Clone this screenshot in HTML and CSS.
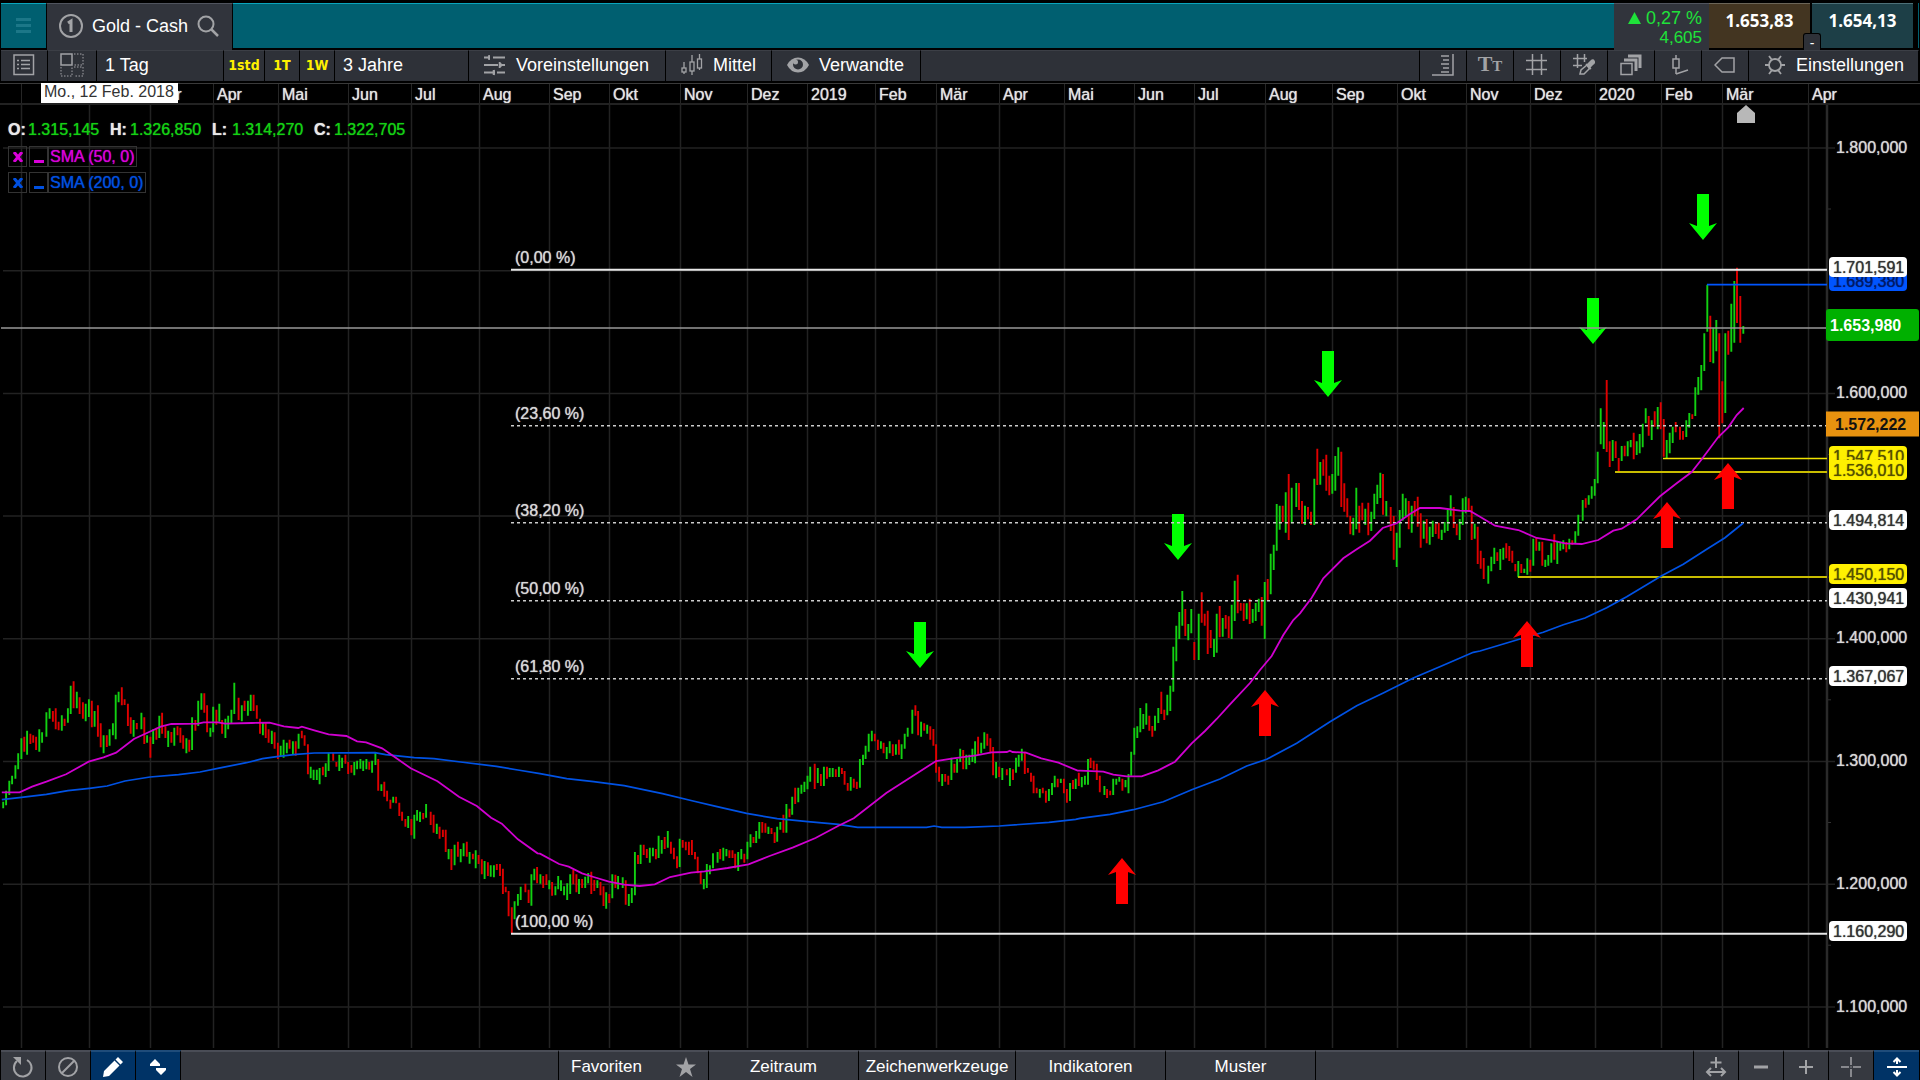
FILE: index.html
```html
<!DOCTYPE html>
<html lang="de">
<head>
<meta charset="utf-8">
<title>Gold - Cash</title>
<link rel="stylesheet" href="styles.css">
</head>
<body>
<header class="titlebar">
  <button class="menu" aria-label="Menü"><svg width="16" height="16" viewBox="0 0 16 16"><path d="M0 0h15v3H0zM0 6h15v3H0zM0 12h15v3H0z" fill="#1c7788"/></svg></button>
  <button class="tab">
    <svg width="24" height="24" viewBox="0 0 24 24" fill="none" stroke="#a2a3a6" stroke-width="2"><circle cx="12" cy="12" r="11"/><path d="M9 9l3-2v11" stroke-width="3"/></svg>
    <span>Gold - Cash</span>
    <svg width="22" height="22" viewBox="0 0 22 22" fill="none" stroke="#a2a3a6" stroke-width="2"><circle cx="9" cy="9" r="7.5"/><path d="M14.5 14.5l6.500 6.500" stroke-width="2.500"/></svg>
  </button>
  <div class="spacer"></div>
  <div class="change"><span class="percent"><svg width="13" height="12" viewBox="0 0 13 12"><path d="M6.500 0L13 12H0z" fill="#1fe23a"/></svg>0,27 %</span><span class="points">4,605</span></div>
  <div class="quotes">
    <button class="quote sell">1.653,83</button>
    <button class="quote buy">1.654,13</button>
    <span class="spread">-</span>
  </div>
</header>

<nav class="toolbar" aria-label="Diagramm">
  <button class="cell icon" aria-label="Liste"><svg width="22" height="22" viewBox="0 0 22 22" fill="none" stroke="#a2a3a6"><rect x="1" y="1" width="19.500" height="19.500" stroke-width="1.500"/><path d="M8 6.500h9M8 10.500h9M8 14.500h9" stroke-width="1.500"/><path d="M4 6.500h2M4 10.500h2M4 14.500h2" stroke-width="1.500"/></svg></button>
  <button class="cell icon wide" aria-label="Layout"><svg width="24" height="24" viewBox="0 0 24 24" fill="none" stroke="#a2a3a6"><rect x="1" y="1" width="11" height="11" stroke-width="1.500"/><path d="M14 1h9v11h-9M1 14v9h11v-9M14 14h9v9h-9" stroke-dasharray="1.500 1.500"/></svg></button>
  <button class="cell interval">1 Tag</button>
  <button class="cell quick h1">1std</button>
  <button class="cell quick t1">1T</button>
  <button class="cell quick t1">1W</button>
  <button class="cell period">3 Jahre</button>
  <button class="cell labelled presets"><svg width="22" height="22" viewBox="0 0 22 22" fill="none" stroke="#a2a3a6" stroke-width="2"><path d="M0 3.500h6M9 3.500h12M0 11h14M17 11h4M0 18.500h9M13 18.500h8"/><path d="M5 1v5M15.500 8v6M9.500 16v5" stroke-width="1.500"/><path d="M3 3.500L6 1v5zM19 11l-3-3v6zM8 18.500l3-3v6z" fill="#a2a3a6" stroke="none"/></svg>Voreinstellungen</button>
  <button class="cell labelled medium"><svg width="22" height="22" viewBox="0 0 22 22" fill="none" stroke="#a2a3a6" stroke-width="1.300"><rect x="1" y="14" width="4" height="4"/><path d="M3 8v6M3 18v2M11 1v7M11 17v4M18.500 0v5M18.500 14v2"/><rect x="9" y="8" width="4" height="9"/><rect x="16.500" y="5" width="4" height="9"/></svg>Mittel</button>
  <button class="cell labelled related"><svg width="22" height="22" viewBox="0 0 22 22"><path d="M0 11Q4 3.500 11 3.500T22 11Q18 18.500 11 18.500T0 11z" fill="#a2a3a6"/><circle cx="11" cy="10.500" r="5" fill="#2e3138"/><circle cx="8.500" cy="8" r="2.500" fill="#a2a3a6"/></svg>Verwandte</button>
  <div class="cell spacer"></div>
  <button class="cell icon" aria-label="Preisachse"><svg width="22" height="22" viewBox="0 0 22 22" fill="none" stroke="#a2a3a6" stroke-width="1.500"><path d="M0 21h21V0M9 2h8M11 6h6M9 10h8M11 14h6M9 18h8"/></svg></button>
  <button class="cell icon" aria-label="Text"><span class="glyph">T<small>T</small></span></button>
  <button class="cell icon" aria-label="Raster"><svg width="22" height="22" viewBox="0 0 22 22" fill="none" stroke="#a2a3a6" stroke-width="1.500"><path d="M6.500 0v21M15.500 0v21M0 6.500h21M0 15.500h21"/></svg></button>
  <button class="cell icon" aria-label="Rasterfarbe"><svg width="22" height="22" viewBox="0 0 22 22" fill="none" stroke="#a2a3a6" stroke-width="1.500"><path d="M4.500 0v14M11.500 0v8M0 4.500h14M0 11.500h9"/><path d="M13 10l5 5M7 20l1-4 6-5 3 3-6 6z"/><path d="M14 11l4-4q2-2 3 0t-1 3l-4 4z" fill="#a2a3a6"/></svg></button>
  <button class="cell icon" aria-label="Ebenen"><svg width="22" height="22" viewBox="0 0 22 22" fill="none" stroke="#a2a3a6"><rect x="1" y="9.500" width="11" height="11" stroke-width="1.500"/><path d="M4 6h12v11M8 2h12v12" stroke-width="3"/></svg></button>
  <button class="cell icon" aria-label="Kerze"><svg width="22" height="22" viewBox="0 0 22 22" fill="none" stroke="#a2a3a6" stroke-width="1.500"><rect x="6" y="5" width="6" height="9"/><path d="M9 1v4M9 14v6M9 20l12-4"/></svg></button>
  <button class="cell icon" aria-label="Preismarke"><svg width="22" height="22" viewBox="0 0 22 22" fill="none" stroke="#a2a3a6" stroke-width="1.500"><path d="M1 11l7-7h12v14H8z"/></svg></button>
  <button class="cell labelled settings"><svg width="22" height="22" viewBox="0 0 22 22" fill="none" stroke="#a2a3a6" stroke-width="1.800"><circle cx="11" cy="11" r="6"/><path d="M17 11h4M1 11h4M14 6l3-4M8 6L5 2M14 16l3 4M8 16l-3 4"/></svg>Einstellungen</button>
</nav>

<main class="chart">
  <div class="months" id="months"></div>
  <time class="date-flag">Mo., 12 Feb. 2018</time>
  <section class="plot">
    <svg id="drawing" class="drawing" viewBox="0 105 1920 945" preserveAspectRatio="none" role="img" aria-label="Goldkurs, 3 Jahre"></svg>
    <div id="labels"></div>
    <div class="legend">
      <dl class="ohlc">
        <div><dt>O:</dt><dd>1.315,145</dd></div>
        <div><dt>H:</dt><dd>1.326,850</dd></div>
        <div><dt>L:</dt><dd>1.314,270</dd></div>
        <div><dt>C:</dt><dd>1.322,705</dd></div>
      </dl>
      <div class="sma fast"><button aria-label="Entfernen"><svg width="10" height="10" viewBox="0 0 10 10"><path d="M1 0l8 10M9 0L1 10" stroke="currentColor" stroke-width="3"/></svg></button><button aria-label="Minimieren"><i class="dash"></i></button><span>SMA (50, 0)</span></div>
      <div class="sma slow"><button aria-label="Entfernen"><svg width="10" height="10" viewBox="0 0 10 10"><path d="M1 0l8 10M9 0L1 10" stroke="currentColor" stroke-width="3"/></svg></button><button aria-label="Minimieren"><i class="dash"></i></button><span>SMA (200, 0)</span></div>
    </div>
  </section>
</main>

<footer class="bottombar">
  <button class="cell tool" aria-label="Zurücksetzen"><svg width="22" height="22" viewBox="0 0 22 22" fill="none" stroke="#a2a3a6" stroke-width="2"><path d="M5 5A8.800 8.800 0 1 0 15 4"/><path d="M1 1h8v8z" fill="#a2a3a6" stroke="none"/></svg></button>
  <button class="cell tool" aria-label="Sperren"><svg width="22" height="22" viewBox="0 0 22 22" fill="none" stroke="#a2a3a6" stroke-width="2"><circle cx="11" cy="11" r="9"/><path d="M5 17L17 5"/></svg></button>
  <button class="cell tool active" aria-label="Zeichnen"><svg width="22" height="22" viewBox="0 0 22 22" fill="#fff"><path d="M1 21l1-6L12.500 4.500l5 5L7 20zM13.500 3.500L16 1l5 5-2.500 2.500z"/></svg></button>
  <button class="cell tool active" aria-label="Verschieben"><svg width="18" height="18" viewBox="0 0 18 18" fill="#fff"><path d="M1 8V6l5-5 5 5v2zM7 10h10v2l-5 5-5-5z"/></svg></button>
  <div class="cell spacer"></div>
  <button class="cell favourites">Favoriten<svg width="20" height="20" viewBox="0 0 20 20"><path d="M10 0l2.500 7.500H20l-6 4.500 2.500 8-6.500-5-6.500 5L6 12 0 7.500h7.500z" fill="#a2a3a6"/></svg></button>
  <button class="cell group">Zeitraum</button>
  <button class="cell group drawtools">Zeichenwerkzeuge</button>
  <button class="cell group">Indikatoren</button>
  <button class="cell group">Muster</button>
  <div class="cell spacer"></div>
  <button class="cell tool" aria-label="Breite"><svg width="22" height="22" viewBox="0 0 22 22" fill="none" stroke="#a2a3a6" stroke-width="2"><path d="M11 1v11M5.500 6.500h11M2 16h18M6 12l-4 4 4 4M16 12l4 4-4 4"/></svg></button>
  <button class="cell tool" aria-label="Verkleinern"><svg width="22" height="22" viewBox="0 0 22 22"><path d="M4 9.500h14v3H4z" fill="#a2a3a6"/></svg></button>
  <button class="cell tool" aria-label="Vergrößern"><svg width="22" height="22" viewBox="0 0 22 22"><path d="M4 10h14v2H4zM10 4h2v14h-2z" fill="#a2a3a6"/></svg></button>
  <button class="cell tool" aria-label="Fadenkreuz"><svg width="20" height="20" viewBox="0 0 20 20" stroke="#a2a3a6" stroke-width="1.500"><path d="M10 0v8M10 12v8M0 10h8M12 10h8M9.500 10h1"/></svg></button>
  <button class="cell tool active last" aria-label="Automatisch skalieren"><svg width="20" height="20" viewBox="0 0 20 20" fill="none" stroke="#fff" stroke-width="2"><path d="M0 10h20M10 1v6M10 13v6M6.500 5L10 1.500 13.500 5M6.500 15l3.500 3.500 3.500-3.500"/></svg></button>
</footer>
<script src="chart.js"></script>
</body>
</html>
```

FILE: styles.css
```css
* { box-sizing: border-box; }

body {
  margin: 0;
  min-height: 100vh;
  display: flex;
  flex-direction: column;
  padding: 3px 1px 0;
  background: #000;
  color: #fff;
  font: 18px/20px "Liberation Sans", Arial, sans-serif;
}

button {
  margin: 0;
  padding: 0;
  border: 0;
  background: none;
  color: inherit;
  font: inherit;
  white-space: nowrap;
}

svg { display: block; flex: none; }
.spacer { flex: 1; }

/* title bar */
.titlebar {
  display: flex;
  height: 47px;
  padding-bottom: 2px;
}

.menu, .titlebar > .spacer {
  background: #005f70;
  border-top: 1px solid #0aa5bd;
}
.menu { width: 45px; padding-left: 15px; }

.tab {
  display: flex;
  align-items: center;
  gap: 9px;
  width: 187px;
  height: 47px;
  padding: 0 0 2px 12px;
  background: #31343c;
  border: 1px solid #000;
  border-top-color: #50545e;
  border-bottom: 0;
}

.change {
  display: flex;
  flex-direction: column;
  align-items: flex-end;
  width: 95px;
  height: 47px;
  padding: 4px 7px 0 0;
  background: #31343c;
  border-top: 1px solid #50545e;
  color: #1fe23a;
}
.percent { display: flex; align-items: center; gap: 5px; }
.points { font-size: 17px; }

.quotes {
  display: flex;
  gap: 2px;
  position: relative;
  padding-right: 5px;
  border-right: 1px solid #005f70;
}
.quote {
  width: 101px;
  padding-bottom: 10px;
  font: bold 17px/20px "Open Sans", sans-serif;
  border-top: 1px solid #6b6558;
}
.sell { background: #433521; }
.buy { background: #1d3f47; border-top-color: #4d7078; }
.spread {
  position: absolute;
  left: 94px;
  top: 30px;
  width: 18px;
  height: 17px;
  border: 1px solid #000;
  border-bottom: 0;
  border-radius: 3px 3px 0 0;
  background: #2e3138;
  font-size: 14px;
  line-height: 18px;
  text-align: center;
}

/* toolbars */
.toolbar { display: flex; height: 31px; }

.cell {
  display: flex;
  align-items: center;
  border-top: 1px solid #3c3f46;
  border-right: 1px solid #000;
  background: #2e3138;
}
.toolbar .cell { padding-bottom: 2px; }
.icon { justify-content: center; width: 47px; }
.wide { width: 49px; }
.interval { width: 127px; padding-left: 8px; }
.quick {
  justify-content: center;
  color: #fff000;
  font: bold 14px/20px "DejaVu Sans Condensed", "DejaVu Sans", sans-serif;
}
.h1 { width: 41px; }
.t1 { width: 35px; }
.period { width: 134px; padding-left: 8px; }
.labelled { gap: 10px; padding-left: 15px; }
.presets { width: 197px; }
.medium { width: 106px; }
.related { width: 149px; }
.settings { width: 170px; }
.glyph { color: #a2a3a6; font: bold 22px/24px "Liberation Serif", serif; }
.glyph small { font-size: 15px; }

.bottombar { display: flex; height: 30px; font-size: 17px; }
.bottombar .cell { background: #363940; border-top: 2px solid #4a4d56; padding-top: 1px; }
.tool { justify-content: center; width: 45px; }
.bottombar .active { background: #003366; border-top-color: #1f4c7a; }
.bottombar .last { border-right: 0; }
.favourites { justify-content: space-between; width: 150px; padding: 0 12px; }
.group { justify-content: center; width: 150px; }
.drawtools { width: 157px; }

/* chart */
.chart {
  position: relative;
  flex: 1;
  display: flex;
  flex-direction: column;
  margin: 2px -1px 0;
  font-size: 16px;
}

.months {
  display: flex;
  height: 22px;
  border-top: 1px solid #3a3a3a;
  border-bottom: 2px solid #222;
  line-height: 22px;
  color: #e4e4e4;
  text-shadow: 0 0 1px currentColor;
}
.month {
  flex: none;
  padding-left: 3px;
  border-left: 1px solid #262626;
}
.month:first-child { border: 0; }

.date-flag {
  position: absolute;
  left: 41px;
  top: 0;
  width: 137px;
  height: 20px;
  padding-left: 3px;
  line-height: 18px;
  background: #fff;
  color: #333;
}

.plot { position: relative; flex: 1; }
.drawing { position: absolute; inset: 0; width: 100%; height: 100%; }

.legend { position: relative; padding: 15px 0 0 8px; text-shadow: 0 0 1px currentColor; }
.ohlc { display: flex; margin: 0 0 6px; }
.ohlc div { display: flex; width: 102px; }
.ohlc dt { width: 20px; font-weight: bold; color: #e8e8e8; }
.ohlc dd { margin: 0; color: #14d014; }

.sma { display: flex; width: max-content; margin-bottom: 5px; }
.sma button, .sma span { height: 21px; border: 1px solid #333; }
.sma button {
  display: flex;
  align-items: center;
  justify-content: center;
  width: 19px;
  margin-right: 2px;
}
.sma button + button { margin-right: 0; }
.sma span { padding: 0 2px 0 1px; line-height: 19px; }
.fast { color: #d800d8; }
.slow { color: #0050e0; }
.dash { width: 10px; height: 3px; margin-top: 10px; background: currentColor; }

.label {
  position: absolute;
  height: 20px;
  line-height: 21px;
  transform: translateY(-50%);
  white-space: nowrap;
  color: #d8d8d8;
  text-shadow: 0 0 1px currentColor;
}
.label.tag { width: 78px; padding-left: 4px; border-radius: 4px; background: #fff; color: #333; }
.label.blue { background: #0055ff; color: #001a66; }
.label.yellow { background: #fff000; color: #554f00; }
.label.live, .label.average { width: 93px; font-weight: bold; text-shadow: none; }
.label.live {
  height: 32px;
  padding-left: 4px;
  line-height: 34px;
  border-radius: 3px;
  background: #00b000;
  color: #fff;
}
.label.average { height: 25px; padding-left: 9px; line-height: 25px; background: #e8920f; color: #111; }
```

FILE: chart.js
```js
const W = 1920, TOP = 105, H = 945, AXIS = 1827;

// Time axis: [start of the month, name]
const months = [[0, ''], [21, ''], [89, ''], [150, 'Mär'], [213, 'Apr'], [278, 'Mai'], [348, 'Jun'], [411, 'Jul'],
  [479, 'Aug'], [549, 'Sep'], [609, 'Okt'], [680, 'Nov'], [747, 'Dez'], [807, '2019'], [875, 'Feb'], [936, 'Mär'],
  [999, 'Apr'], [1064, 'Mai'], [1134, 'Jun'], [1194, 'Jul'], [1265, 'Aug'], [1332, 'Sep'], [1397, 'Okt'],
  [1466, 'Nov'], [1530, 'Dez'], [1595, '2020'], [1661, 'Feb'], [1722, 'Mär'], [1808, 'Apr']];

// Price axis: [height, price]
const prices = [[148, '1.800,000'], [393, '1.600,000'], [638, '1.400,000'], [761, '1.300,000'], [884, '1.200,000'], [1007, '1.100,000']];

const fib = [[270, '(0,00 %)'], [426, '(23,60 %)'], [523, '(38,20 %)'], [601, '(50,00 %)'], [679, '(61,80 %)'], [934, '(100,00 %)']];

const tags = [[281, '1.689,380', 'tag blue'], [267, '1.701,591', 'tag'], [325, '1.653,980', 'live'],
  [424, '1.572,222', 'average'], [456, '1.547,510', 'tag yellow'], [470, '1.536,010', 'tag yellow'],
  [520, '1.494,814', 'tag'], [574, '1.450,150', 'tag yellow'], [598, '1.430,941', 'tag'],
  [676, '1.367,067', 'tag'], [931, '1.160,290', 'tag']];

// Each stretch has its own origin and units per pixel.
// bars: x, high, low; a negative x is a falling day.
const stretches = [
  { x: 0, y: 640, kx: 2.8, bars: [
    9,485,505, 17,452,496, 26,422,465, 34,407,433, 43,376,416, 51,340,388, 60,295,357, -68,290,335, 76,272,344, -85,281,312,
    -93,286,308, -101,290,330, 110,268,335, 118,277,308, 130,217,290, 139,205,236, -148,213,245, -156,205,268, -164,245,271,
    173,226,272, -181,236,258, 190,205,248, 198,137,222, -206,124,205, 215,155,205, -223,172,222, -232,187,236, 240,191,244,
    249,178,231, -257,182,262, 265,213,260, -274,196,290, -282,250,322, 290,286,340, -299,286,321, 307,268,317, 316,250,286,
    324,164,298, 332,155,187, -341,142,196, -349,178,195, -358,191,258, -366,232,281, 374,240,290, -383,249,268, 396,218,268,
    -404,232,312, 412,286,308, -421,290,353, 429,268,312, -438,263,299, 446,227,294, -454,218,281, -463,259,294, 471,272,321,
    -480,276,308, 488,263,317, -497,259,286, -505,263,308, -513,286,326, 522,295,340, -530,299,335, 538,232,330, -547,240,272,
    555,182,258, 564,160,209, -572,160,218, -580,196,277, 589,263,290, 597,200,277, -606,209,254, 614,191,245, -622,240,281,
    631,236,294, 639,227,268, 648,209,250, 656,128,222, -668,173,240, 677,196,244, -685,182,213, 694,182,227, 702,164,213,
    -710,164,213, -719,196,236, -728,236,281, 736,249,286, -744,250,294, -752,268,308, 761,272,312, -769,277,326, -778,308,357,
    786,317,349, 794,299,353, 803,308,340, -811,299,326, 820,304,344, -828,304,347, 836,281,326, -845,272,295, -853,286,317,
    -862,313,403, 870,380,415, 878,389,420, 887,389,420, 895,384,433, -904,380,406, 912,370,411, 920,338,393, -933,338,362,
    -942,366,380, 950,344,393, 958,353,384, -967,344,371, -975,366,402, -984,375,398, 992,366,406, 1000,362,388, 1009,357,386,
    1017,362,393, 1026,357,388, -1034,366,389, 1042,362,398, 1051,338,375, -1059,357,452, 1068,433,453, -1076,425,470,
    -1084,452,484, -1093,479,506, 1101,470,488, -1109,470,490, -1118,488,528, -1126,515,542, -1135,537,560, 1143,528,564,
    -1152,537,586, 1160,524,596, 1168,510,542, 1176,515,546, -1185,519,538, 1193,492,533, -1206,515,555, -1214,524,578,
    1223,551,582, -1231,560,596, -1240,569,591, -1248,569,636, 1256,627,658, -1264,627,690, 1273,614,676, -1282,605,650,
    1290,627,667, 1298,610,649, -1307,605,650, 1315,636,671, -1324,641,658, 1332,631,685, -1340,645,672, -1349,658,703,
    1357,663,717, -1366,667,708, 1374,676,710, 1383,676,712, -1391,672,690, -1400,672,708, -1408,686,762, -1416,740,757,
    -1424,753,829, -1433,802,880, 1441,784,838, 1450,762,797, 1458,740,780, -1471,731,757, -1480,749,789, 1488,703,797,
    1496,686,721, -1504,681,730, 1513,703,731, -1521,708,744, -1530,703,735, 1538,721,748, -1546,726,767, 1555,739,766, 1563,708,748],
    fast: [5,457, 55,457, 90,440, 130,425, 185,403, 248,365, 290,352, 325,338, 375,297, 425,272, 450,260, 480,252, 555,251,
      570,247, 610,247, 630,251, 705,249, 755,248, 795,259, 835,264, 845,260, 880,271, 920,283, 970,288, 1000,304, 1025,307,
      1070,325, 1100,347, 1150,385, 1225,424, 1285,470, 1335,498, 1375,533, 1405,551, 1450,598, 1505,640],
    slow: [5,479, 60,472, 130,463, 190,452, 250,445, 300,438, 350,423, 420,411, 500,404, 560,396, 620,383, 690,368, 735,356,
      780,349, 830,343, 880,339, 1050,338, 1080,344, 1160,353, 1215,356, 1290,366, 1390,379, 1450,390] },
  { x: 540, y: 640, kx: 2.6133, bars: [
    55,721,753, 63,739,766, 71,730,780, 79,703,762, -87,690,733, -95,703,757, 102,717,762, -110,717,744, 118,710,744, 126,699,730,
    -134,695,762, -142,720,753, 150,721,744, -158,726,766, -166,739,798, 173,757,806, -181,762,789, 189,703,775, -197,704,744,
    204,708,748, 216,712,744, -224,721,794, 232,762,798, 240,744,789, 248,636,766, -256,645,672, 263,614,672, -271,614,645,
    -279,627,654, 287,623,668, 295,623,649, -303,627,658, 310,587,654, 318,600,641, -326,591,627, 334,573,623, -342,605,641,
    -350,623,658, -358,649,685, 365,596,681, -373,600,623, -381,605,631, -389,605,645, -397,600,645, -405,636,658, -412,650,700,
    -420,694,732, 428,717,748, 436,672,744, 444,676,703, 452,640,685, 464,636,668, -471,627,658, 479,623,662, 487,627,649,
    -495,631,654, -503,631,654, -510,641,685, 518,636,693, 526,627,658, -534,641,668, 542,605,658, 550,583,622, -558,591,609,
    565,573,609, 573,546,596, -581,546,578, -589,550,578, 597,560,582, -605,564,582, -613,577,609, 620,560,605, 628,546,569,
    -636,524,578, 644,492,578, -652,506,532, 659,470,524, -667,443,492, 675,443,487, 683,434,461, 691,425,456, 699,407,448,
    706,380,425, -718,371,447, 726,384,429, -734,402,438, 742,380,438, -750,380,416, 757,384,411, 765,384,411, -773,388,411,
    781,380,411, -789,384,402, -796,393,434, -804,429,452, 812,411,452, -820,416,443, -828,425,447, 836,357,443, 844,344,375,
    851,317,357, 859,281,335, 867,272,304, -875,281,304, -883,299,330, 891,304,326, -898,308,340, 906,321,357, 914,304,340,
    -922,313,348, 930,313,344, -938,299,344, 945,313,357, 953,281,326, 961,263,290, 973,209,281, -981,196,227, -988,213,286,
    996,245,290, -1004,250,272, 1012,254,281, -1020,259,299, -1028,267,317, -1035,313,398, -1043,380,425, 1051,402,438,
    -1059,402,425, -1067,407,434, 1075,353,420, -1083,371,398, 1090,357,398, 1098,326,366, -1106,330,388, 1114,344,388,
    1122,344,375, 1130,326,366, 1137,304,370, -1145,290,344, 1153,308,340, 1161,277,326, -1169,281,317, -1177,295,340,
    -1184,321,406, 1192,366,415, -1200,380,411, 1208,384,420, -1220,388,406, 1228,384,438, -1236,388,420, 1244,353,398,
    1251,344,380, 1259,326,362, -1267,335,402, -1275,384,398, -1283,398,425, -1290,407,460, -1298,443,460, 1306,447,473,
    -1314,443,460, -1322,452,488, 1330,447,483, 1338,429,465, 1345,407,442, -1353,416,442, 1361,416,429, -1369,416,460,
    -1377,447,488, 1385,429,483, -1393,420,447, 1400,416,447, -1408,398,438, 1416,411,442, 1424,407,434, 1432,357,434,
    -1439,353,384, -1447,362,389, -1455,371,420, -1463,407,457, 1475,438,465, -1482,447,474, -1490,452,466, 1498,416,465,
    1506,416,434, 1514,411,425, -1522,416,452, 1530,420,442, 1538,402,460, 1545,335,407, 1553,263,344, 1561,259,294],
    fast: [0,641, 50,672, 75,680, 110,700, 140,711, 180,725, 220,734, 260,738, 300,733, 340,711, 395,698, 430,694, 490,684,
      545,673, 600,648, 660,623, 720,594, 780,557, 820,535, 905,459, 970,411, 1035,363, 1080,355, 1140,346, 1180,337, 1220,336,
      1228,332, 1235,336, 1270,338, 1310,355, 1355,368, 1405,392],
    slow: [0,401, 70,416, 140,425, 220,437, 320,461, 400,483, 460,499, 540,520, 620,536, 700,545, 780,553, 830,562, 1010,562,
      1030,558, 1050,562, 1110,562, 1200,558, 1330,547, 1400,538] },
  { x: 1080, y: 400, kx: 3, bars: [
    181,924,997, 190,942,987, 199,910,974, -208,947,992, -217,978,1010, 225,947,992, 235,924,969, -244,875,942, -253,929,960,
    262,884,946, 271,857,933, 280,740,875, 289,677,784, 298,636,717, 307,573,677, -316,627,708, 325,672,721, 334,627,700,
    -343,726,780, 356,641,780, -365,577,668, -374,641,677, -383,632,762, -392,690,744, 402,717,771, 410,641,758, -419,618,712,
    428,654,710, -437,645,686, -446,649,714, 455,614,717, 464,542,663, -473,524,640, -482,609,632, -491,610,663, 500,610,658,
    -509,596,672, 518,627,668, 527,609,663, 536,596,636, -545,591,677, 554,546,717, -563,537,602, 572,461,583, 581,434,510,
    590,312,452, 599,317,389, -608,317,366, 617,277,398, -626,222,420, 635,263,370, 649,249,321, -657,249,330, -666,303,371,
    675,317,375, -684,321,358, -693,335,375, 703,236,375, -712,146,255, 721,186,254, -730,178,227, -739,164,272, -748,227,286,
    757,222,281, 766,168,272, 775,142,227, -784,155,321, -793,250,335, -802,295,352, -811,348,403, 820,353,406, 829,263,388,
    -838,317,398, -847,308,361, 856,326,375, -865,308,406, 874,335,393, 883,281,357, 892,254,312, 901,218,294, -909,222,344,
    919,303,349, -932,321,393, -941,348,479, 950,398,501, 959,330,443, 968,281,362, 977,295,348, -986,303,388, 995,317,398,
    -1004,303,348, -1013,290,380, -1022,340,443, 1031,362,416, -1040,357,430, 1049,380,434, 1058,362,411, -1067,371,402,
    -1076,368,416, 1085,389,420, 1094,366,398, 1103,330,393, 1112,286,348, -1121,321,384, -1130,371,406, 1139,357,420,
    1148,295,375, 1157,290,340, -1166,295,335, -1175,317,420, 1184,371,416, -1193,380,492, -1202,452,506, -1211,474,537,
    1225,497,551, 1234,470,514, 1243,443,492, -1252,457,483, 1261,447,510, 1270,443,479, -1279,430,475, -1288,438,483,
    -1297,452,488, -1306,492,514, 1315,483,532, -1324,492,519, 1333,506,519, 1342,475,524, -1351,479,515, 1360,416,497,
    -1369,412,452, 1378,425,452, -1387,425,497, 1396,479,501, 1405,465,497, 1414,430,488, -1423,403,479, 1432,425,492],
    fast: [0,1112, 70,1115, 100,1124, 140,1129, 185,1129, 235,1111, 285,1085, 335,1030, 375,993, 410,957, 450,913, 510,849,
      540,810, 575,768, 610,705, 640,660, 660,640, 695,593, 730,535, 790,475, 830,448, 870,422, 908,384, 950,370, 990,342,
      1020,324, 1080,324, 1140,332, 1170,333],
    slow: [0,1255, 90,1243, 160,1229, 250,1205, 335,1169, 420,1137, 500,1098, 560,1078, 650,1030, 750,965, 830,917, 910,879,
      1000,834, 1090,796, 1180,757] },
  { x: 1480, y: 180, kx: 3, bars: [
    241,1085,1112, 250,1081,1108, -259,1086,1117, 268,1076,1108, -277,1081,1094, 286,1054,1090, 295,1004,1067, 308,960,1022,
    -317,955,983, 326,946,974, 335,919,956, 344,897,947, 353,815,910, 362,685,793, 371,726,807, -380,600,816, -389,784,861,
    398,780,843, -407,784,834, -416,834,876, 425,798,843, -434,797,829, 443,784,829, 452,780,802, -461,758,838, 470,784,825,
    479,762,820, 488,731,802, 497,685,730, -506,708,767, 515,721,780, -524,694,740, 533,681,748, -542,667,748, -551,717,830,
    560,780,834, 569,758,820, 578,740,789, -587,726,757, -600,740,779, -609,753,779, 619,721,771, 628,699,743, -637,703,717,
    646,622,708, 655,591,644, 664,555,631, 673,460,573, 682,314,455, -691,407,546, 700,443,550, 709,420,514, -718,460,775,
    -727,604,730, 736,460,699, -745,452,524, 754,371,515, 763,303,488, -771,263,429, -781,348,488, 790,438,461],
    fast: [0,1010, 45,1037, 115,1050, 170,1074, 215,1081, 255,1090, 305,1092, 355,1080, 400,1052, 425,1046, 470,1018, 500,988,
      540,949, 590,910, 635,876, 665,838, 715,771, 745,742, 770,705, 791,684],
    slow: [0,1413, 60,1395, 120,1377, 190,1357, 250,1334, 315,1314, 380,1283, 440,1250, 545,1187, 610,1153, 680,1108,
      735,1073, 790,1029] }
];

const down = [[1703, 240], [1593, 344], [1328, 397], [1178, 560], [920, 668]];
const up = [[1728, 463], [1667, 502], [1527, 621], [1265, 690], [1122, 858]];

const svg = [];
const line = (x1, y1, x2, y2, color, width, dash) =>
  svg.push(`<path d="M${x1} ${y1}L${x2} ${y2}" fill="none" stroke="${color}" stroke-width="${width}"${dash ? ` stroke-dasharray="${dash}"` : ''}/>`);

// Grid
months.slice(1).forEach(([x]) => line(x + .5, TOP, x + .5, 1048, '#222', 1.5));
for (let i = 0; i < 8; i++) {
  const y = 148 + i * 122.7;
  line(3, y, AXIS + 8, y, '#222', 1.5);
  line(AXIS, y + 61, AXIS + 4, y + 61, '#333', 1);
}
line(AXIS, TOP, AXIS, 1048, '#2a2a2a', 2.5);

// Price bars and averages
const paths = { rise: '', fall: '', fast: '', slow: '' };
stretches.forEach(s => {
  for (let i = 0; i < s.bars.length; i += 3) {
    const [x, t, b] = s.bars.slice(i, i + 3);
    paths[x < 0 ? 'fall' : 'rise'] += `M${(s.x + Math.abs(x) / s.kx).toFixed(1)} ${(s.y + t / 3).toFixed(1)}V${(s.y + b / 3).toFixed(1)}`;
  }
  ['fast', 'slow'].forEach(k => {
    for (let i = 0; i < s[k].length; i += 2)
      paths[k] += `${paths[k] ? 'L' : 'M'}${(s.x + s[k][i] / s.kx).toFixed(1)} ${(s.y + s[k][i + 1] / 3).toFixed(1)}`;
  });
});
svg.push(`<path d="${paths.rise}" stroke="#12d012" stroke-width="1.9"/>`);
svg.push(`<path d="${paths.fall}" stroke="#e00000" stroke-width="1.9"/>`);

// Arrows
down.forEach(([x, y]) => svg.push(`<path transform="translate(${x} ${y})" d="M0 0L14 -17L6 -14V-46H-6V-14L-14 -17z" fill="#0f0"/>`));

// Levels
fib.forEach(([y], i) => line(511, y - .3, AXIS, y - .3, i % 5 ? '#ccc' : '#e8e8e8', i % 5 ? 1.6 : 2, i % 5 ? '3 3' : ''));
line(1, 328, AXIS, 328, '#999', 1.4);
line(1707, 284.6, AXIS, 284.6, '#0055ff', 1.6);
line(1663, 458.5, AXIS, 458.5, '#f0e400', 1.6);
line(1615, 472, AXIS, 472, '#c8bc00', 1.9);
line(1518, 577, AXIS, 577, '#c8bc00', 1.9);
svg.push(`<path d="${paths.slow}" fill="none" stroke="#0052e4" stroke-width="1.7"/>`);
svg.push(`<path d="${paths.fast}" fill="none" stroke="#d000d0" stroke-width="1.8"/>`);
up.forEach(([x, y]) => svg.push(`<path transform="translate(${x} ${y})" d="M0 0L14 17L6 14V46H-6V14L-14 17z" fill="#f00"/>`));
svg.push('<path d="M1746 105L1755 113V123H1737V113z" fill="#b8b8b8"/>');
document.getElementById('drawing').innerHTML = svg.join('');

document.getElementById('months').innerHTML = months.map(([x, name], i) => {
  const end = i + 1 < months.length ? months[i + 1][0] : W;
  return `<span class="month" style="width:${(end - x) / W * 100}%">${name}</span>`;
}).join('');

const label = (x, y, text, kind) =>
  `<span class="label ${kind}" style="left:${x / W * 100}%;top:${(y - TOP) / H * 100}%">${text}</span>`;
document.getElementById('labels').innerHTML =
  prices.map(([y, t]) => label(1836, y - 1, t, '')).join('') +
  fib.map(([y, t]) => label(515, y - 13, t, '')).join('') +
  tags.map(([y, t, k]) => label(k.startsWith('tag') ? 1829 : 1826, y, t, k)).join('');
```
